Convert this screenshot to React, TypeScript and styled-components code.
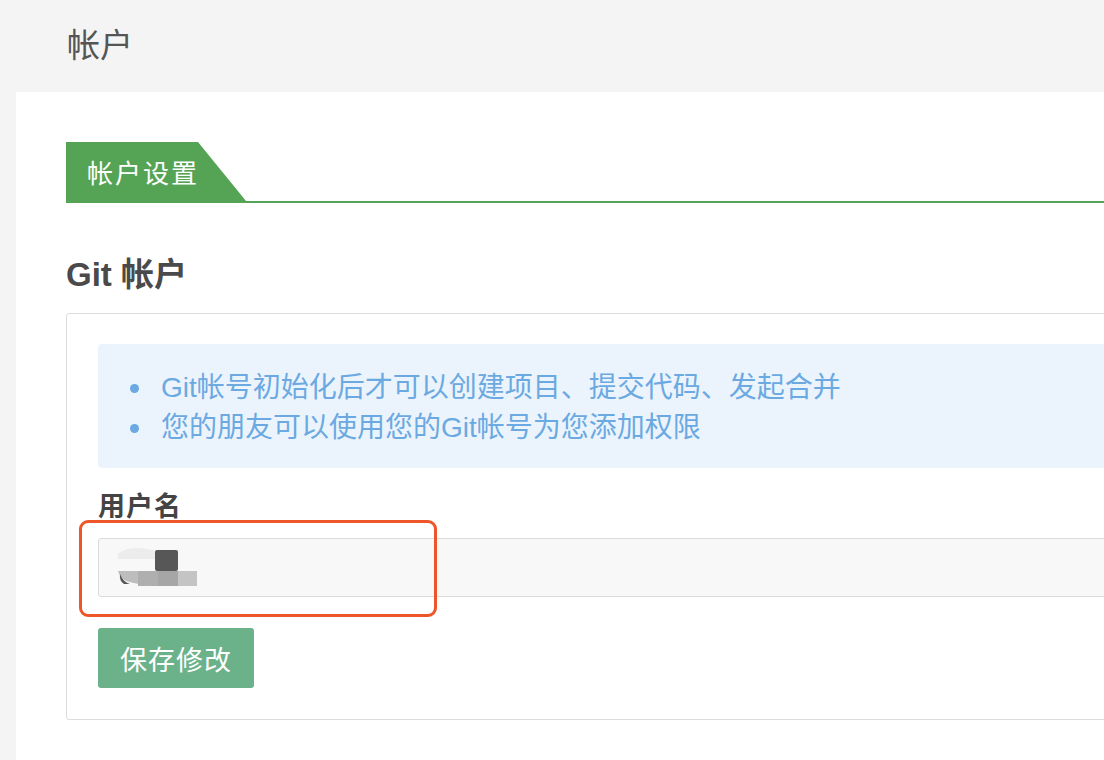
import React from "react";
import styled, { createGlobalStyle } from "styled-components";

const Global = createGlobalStyle`
  html, body { margin: 0; padding: 0; background: #f4f4f4; overflow: hidden; }
  body { font-family: "Liberation Sans", "Noto Sans CJK SC", sans-serif; }
  * { box-sizing: border-box; }
`;

const Page = styled.div`
  width: 1104px;
  height: 760px;
  overflow: hidden;
  display: flex;
  flex-direction: column;
`;

const Header = styled.div`
  height: 92px;
  flex: none;
  padding-left: 67px;
  display: flex;
  align-items: center;
  padding-bottom: 6px;
`;

const Title = styled.h1`
  margin: 0;
  font-size: 33px;
  font-weight: 400;
  color: #555;
`;

const Panel = styled.div`
  margin-left: 16px;
  width: 1200px;
  flex: 1;
  background: #fff;
  padding: 50px 0 0 50px;
`;

const TabBar = styled.div`
  display: flex;
  border-bottom: 2px solid #55a455;
`;

const Tab = styled.div`
  width: 180px;
  height: 59px;
  background: #55a455;
  color: #fff;
  font-size: 26px;
  padding-left: 21px;
  display: flex;
  align-items: center;
  letter-spacing: 2px;
  clip-path: polygon(0 0, 132px 0, 180px 100%, 0 100%);
`;

const SectionTitle = styled.h2`
  margin: 52px 0 0 0;
  font-size: 33px;
  line-height: 40px;
  font-weight: 700;
  color: #4a4a4a;
`;

const Card = styled.div`
  margin-top: 18px;
  border: 1px solid #dcdcdc;
  border-radius: 3px;
  padding: 30px 0 31px 31px;
`;

const Notice = styled.ul`
  margin: 0;
  list-style: none;
  background: #ebf4fc;
  border-radius: 4px;
  padding: 24px 0 20px 32px;
`;

const NoticeItem = styled.li`
  position: relative;
  padding-left: 31px;
  font-size: 28px;
  line-height: 40px;
  color: #6ba9e2;
  &::before {
    content: "";
    position: absolute;
    left: 0;
    top: 16px;
    width: 9px;
    height: 9px;
    border-radius: 50%;
    background: #6ba9e2;
  }
`;

const Label = styled.div`
  margin-top: 22px;
  font-size: 27px;
  line-height: 34px;
  letter-spacing: 1px;
  font-weight: 700;
  color: #444;
`;

const Field = styled.div`
  position: relative;
  margin-top: 14px;
`;

const Input = styled.div`
  height: 59px;
  background: #f8f8f8;
  border: 1px solid #dcdcdc;
  border-radius: 3px;
  padding-left: 19px;
  display: flex;
  align-items: center;
`;

const Highlight = styled.div`
  position: absolute;
  left: -19px;
  top: -18px;
  width: 358px;
  height: 97px;
  border: 3px solid #ee5529;
  border-radius: 9px;
  pointer-events: none;
`;

const SaveButton = styled.button`
  margin-top: 31px;
  width: 156px;
  height: 60px;
  border: none;
  border-radius: 3px;
  background: #6bb18a;
  color: #fff;
  font-family: "Liberation Sans", "Noto Sans CJK SC", sans-serif;
  font-size: 27px;
  letter-spacing: 1px;
  display: block;
`;

const Smudge = () => (
  <svg width="80" height="42" viewBox="0 0 80 42">
    <path d="M0 7 Q6 1 20 1 Q32 2 37 4 L37 12 L0 12 Z" fill="#ececec" />
    <rect x="37" y="3" width="23" height="21" rx="2" fill="#575757" />
    <path d="M0 24 L79 24 L79 39 L40 39 Q20 38 8 34 Q2 31 0 24 Z" fill="#bdbdbd" />
    <rect x="20" y="24" width="20" height="15" fill="#afafaf" />
    <rect x="40" y="24" width="20" height="15" fill="#a6a6a6" />
    <rect x="60" y="24" width="19" height="15" fill="#c4c4c4" />
    <path d="M2 27 Q5 35 12 37 L6 37 Q1 34 2 27 Z" fill="#555" />
  </svg>
);

export default function App() {
  return (
    <Page>
      <Global />
      <Header>
        <Title>帐户</Title>
      </Header>
      <Panel>
        <TabBar>
          <Tab>帐户设置</Tab>
        </TabBar>
        <SectionTitle>Git 帐户</SectionTitle>
        <Card>
          <Notice>
            <NoticeItem>Git帐号初始化后才可以创建项目、提交代码、发起合并</NoticeItem>
            <NoticeItem>您的朋友可以使用您的Git帐号为您添加权限</NoticeItem>
          </Notice>
          <Label>用户名</Label>
          <Field>
            <Input>
              <Smudge />
            </Input>
            <Highlight />
          </Field>
          <SaveButton>保存修改</SaveButton>
        </Card>
      </Panel>
    </Page>
  );
}
